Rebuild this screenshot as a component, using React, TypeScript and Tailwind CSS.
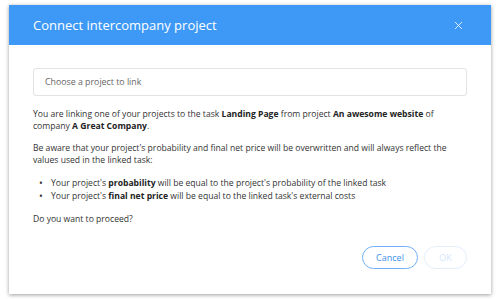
import { X } from "lucide-react";

const font = { fontFamily: '"Open Sans", "Noto Sans", sans-serif' };

export default function App() {
  return (
    <div className="w-[500px] h-[299px] bg-white pt-[5px] pl-[9px]" style={font}>
      <div className="w-[482px] h-[289px] bg-white flex flex-col shadow-[0_1px_4px_rgba(0,0,0,0.4)]">
        {/* Header */}
        <div className="h-[40px] bg-[#3d99f5] flex items-center justify-between pl-[24px] pr-[26px]">
          <h2 className="text-[13px] text-white leading-none">Connect intercompany project</h2>
          <X className="w-[13px] h-[13px] text-white" strokeWidth={1.5} />
        </div>

        {/* Body */}
        <div className="flex-1 flex flex-col px-[24px] pt-[23px] text-[8.6px] leading-[12px] text-[#333]">
          <div className="h-[28px] border border-[#e3e3e3] rounded-[3px] flex items-center px-[11px] text-[8.8px] text-[#666]">
            Choose a project to link
          </div>

          <p className="mt-[12px]">
            You are linking one of your projects to the task <b className="font-bold text-[#222]">Landing Page</b> from project{" "}
            <b className="font-bold text-[#222]">An awesome website</b> of company <b className="font-bold text-[#222]">A Great Company</b>.
          </p>

          <p className="mt-[10px]">
            Be aware that your project's probability and final net price will be overwritten and will always reflect the values used in the linked task:
          </p>

          <ul className="mt-[11px] flex flex-col gap-[1px]">
            <li className="flex">
              <span className="w-[18px] pl-[6px] text-[10px] leading-[12px]">•</span>
              <span>
                Your project's <b className="font-bold text-[#222]">probability</b> will be equal to the project's probability of the linked task
              </span>
            </li>
            <li className="flex">
              <span className="w-[18px] pl-[6px] text-[10px] leading-[12px]">•</span>
              <span>
                Your project's <b className="font-bold text-[#222]">final net price</b> will be equal to the linked task's external costs
              </span>
            </li>
          </ul>

          <p className="mt-[11px]">Do you want to proceed?</p>

          <div className="flex justify-end gap-[6px] mt-[21px]">
            <button className="w-[56px] h-[23px] rounded-full border-[1.5px] border-[#6fb0f6] text-[#3d8fe8] text-[9px]">
              Cancel
            </button>
            <button className="w-[43px] h-[23px] rounded-full border-[1.5px] border-[#e3effd] text-[#d5e6fb] text-[9px]">
              OK
            </button>
          </div>
        </div>
      </div>
    </div>
  );
}
